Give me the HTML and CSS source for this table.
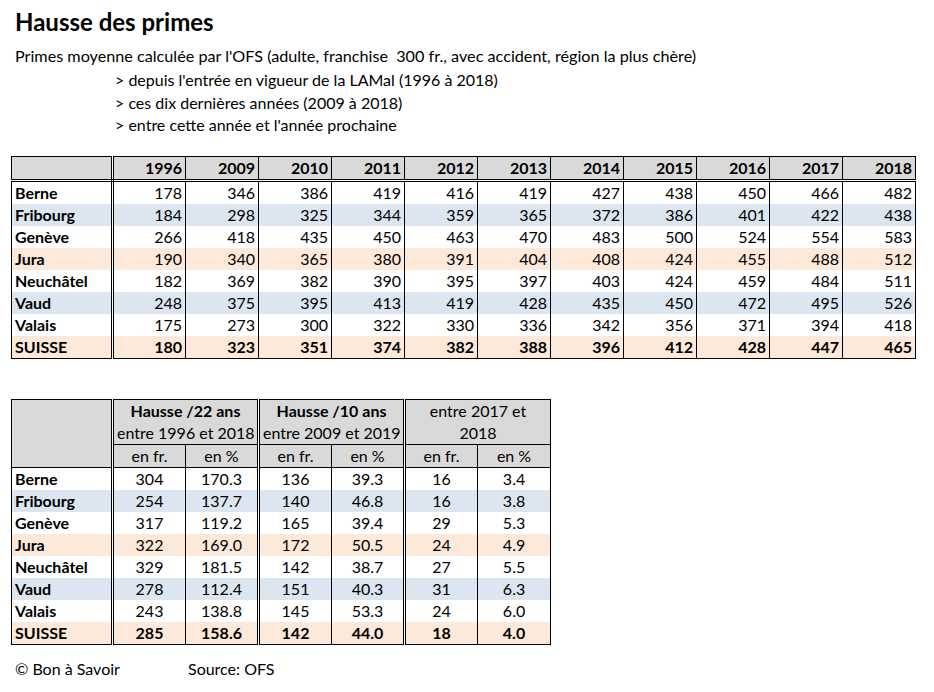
FILE: index.html
```html
<!DOCTYPE html>
<html lang="fr">
<head>
<meta charset="utf-8">
<title>Hausse des primes</title>
<link rel="stylesheet" href="styles.css">
</head>
<body>
<div class="page">
  <h1 class="title">Hausse des primes</h1>
  <p class="intro">Primes moyenne calculée par l'OFS (adulte, franchise&nbsp; 300 fr., avec accident, région la plus chère)</p>
  <ul class="points">
    <li>&gt; depuis l'entrée en vigueur de la LAMal (1996 à 2018)</li>
    <li>&gt; ces dix dernières années (2009 à 2018)</li>
    <li>&gt; entre cette année et l'année prochaine</li>
  </ul>

  <table class="grid years">
    <colgroup>
      <col class="c-name"><col><col><col><col><col><col><col><col><col><col><col>
    </colgroup>
    <thead>
      <tr><th class="name"></th><th>1996</th><th>2009</th><th>2010</th><th>2011</th><th>2012</th><th>2013</th><th>2014</th><th>2015</th><th>2016</th><th>2017</th><th>2018</th></tr>
    </thead>
    <tbody>
      <tr><td class="name">Berne</td><td>178</td><td>346</td><td>386</td><td>419</td><td>416</td><td>419</td><td>427</td><td>438</td><td>450</td><td>466</td><td>482</td></tr>
      <tr class="blue"><td class="name">Fribourg</td><td>184</td><td>298</td><td>325</td><td>344</td><td>359</td><td>365</td><td>372</td><td>386</td><td>401</td><td>422</td><td>438</td></tr>
      <tr><td class="name">Genève</td><td>266</td><td>418</td><td>435</td><td>450</td><td>463</td><td>470</td><td>483</td><td>500</td><td>524</td><td>554</td><td>583</td></tr>
      <tr class="peach"><td class="name">Jura</td><td>190</td><td>340</td><td>365</td><td>380</td><td>391</td><td>404</td><td>408</td><td>424</td><td>455</td><td>488</td><td>512</td></tr>
      <tr><td class="name">Neuchâtel</td><td>182</td><td>369</td><td>382</td><td>390</td><td>395</td><td>397</td><td>403</td><td>424</td><td>459</td><td>484</td><td>511</td></tr>
      <tr class="blue"><td class="name">Vaud</td><td>248</td><td>375</td><td>395</td><td>413</td><td>419</td><td>428</td><td>435</td><td>450</td><td>472</td><td>495</td><td>526</td></tr>
      <tr><td class="name">Valais</td><td>175</td><td>273</td><td>300</td><td>322</td><td>330</td><td>336</td><td>342</td><td>356</td><td>371</td><td>394</td><td>418</td></tr>
      <tr class="peach total"><td class="name">SUISSE</td><td>180</td><td>323</td><td>351</td><td>374</td><td>382</td><td>388</td><td>396</td><td>412</td><td>428</td><td>447</td><td>465</td></tr>
    </tbody>
  </table>

  <table class="grid rises">
    <colgroup>
      <col class="c-name"><col><col><col><col><col><col>
    </colgroup>
    <thead>
      <tr class="groups">
        <th class="name" rowspan="2"></th>
        <th colspan="2" class="grp"><strong>Hausse /22 ans</strong><br><span>entre 1996 et 2018</span></th>
        <th colspan="2" class="grp"><strong>Hausse /10 ans</strong><br><span>entre 2009 et 2019</span></th>
        <th colspan="2" class="grp"><span>entre 2017 et<br>2018</span></th>
      </tr>
      <tr class="units">
        <th>en fr.</th><th class="gend">en %</th>
        <th>en fr.</th><th class="gend">en %</th>
        <th>en fr.</th><th>en %</th>
      </tr>
    </thead>
    <tbody>
      <tr><td class="name">Berne</td><td>304</td><td class="gend">170.3</td><td>136</td><td class="gend">39.3</td><td>16</td><td>3.4</td></tr>
      <tr class="blue"><td class="name">Fribourg</td><td>254</td><td class="gend">137.7</td><td>140</td><td class="gend">46.8</td><td>16</td><td>3.8</td></tr>
      <tr><td class="name">Genève</td><td>317</td><td class="gend">119.2</td><td>165</td><td class="gend">39.4</td><td>29</td><td>5.3</td></tr>
      <tr class="peach"><td class="name">Jura</td><td>322</td><td class="gend">169.0</td><td>172</td><td class="gend">50.5</td><td>24</td><td>4.9</td></tr>
      <tr><td class="name">Neuchâtel</td><td>329</td><td class="gend">181.5</td><td>142</td><td class="gend">38.7</td><td>27</td><td>5.5</td></tr>
      <tr class="blue"><td class="name">Vaud</td><td>278</td><td class="gend">112.4</td><td>151</td><td class="gend">40.3</td><td>31</td><td>6.3</td></tr>
      <tr><td class="name">Valais</td><td>243</td><td class="gend">138.8</td><td>145</td><td class="gend">53.3</td><td>24</td><td>6.0</td></tr>
      <tr class="peach total"><td class="name">SUISSE</td><td>285</td><td class="gend">158.6</td><td>142</td><td class="gend">44.0</td><td>18</td><td>4.0</td></tr>
    </tbody>
  </table>

  <div class="footer">
    <span class="copy">© Bon à Savoir</span>
    <span class="source">Source: OFS</span>
  </div>
</div>
</body>
</html>
```
FILE: styles.css
```css
html, body {
  margin: 0;
  padding: 0;
  background: #ffffff;
}
body {
  font-family: Lato, "Open Sans", Arial, sans-serif;
  color: #000000;
}
.page {
  padding: 8px 0 0 11px;
}
.title {
  margin: 0 0 0 4px;
  font-size: 24px;
  line-height: 27px;
  font-weight: 700;
}
.intro {
  margin: 10px 0 0 4px;
  font-size: 16.2px;
  line-height: 22px;
}
.points {
  list-style: none;
  margin: 2px 0 0 104px;
  padding: 0;
  font-size: 16px;
  line-height: 22.5px;
}
.grid {
  border-collapse: collapse;
  table-layout: fixed;
  font-size: 16px;
  border: 1px solid #000;
}
.grid th, .grid td {
  height: 22px;
  padding: 0 3px;
  line-height: 20px;
  border-left: 1px solid #000;
  border-right: 1px solid #000;
  white-space: nowrap;
  overflow: hidden;
}
.grid thead th {
  background: #d9d9d9;
  border-bottom: 1px solid #000;
}
.grid .name {
  text-align: left;
  font-weight: 700;
  border-right: 3px double #000;
}
.grid .blue td { background: #dce6f1; }
.grid .peach td { background: #fde9d9; }
.grid .total td { font-weight: 700; }

.years {
  width: 905px;
  margin-top: 19px;
}
.years col { width: 73px; }
.years .c-name { width: 101px; }
.years thead th {
  text-align: right;
  font-weight: 700;
  border-bottom: 3px double #000;
}
.years td { text-align: right; }

.rises {
  width: 539px;
  margin-top: 40px;
}
.rises col { width: 73px; }
.rises .c-name { width: 101px; }
.rises th, .rises td { text-align: center; }
.rises thead th { font-weight: 400; }
.rises .groups th {
  height: 44px;
  line-height: 22px;
}
.rises .grp {
  border-right: 3px double #000;
}
.rises .grp:last-child { border-right: 1px solid #000; }
.rises .grp strong { font-weight: 700; }
.rises .gend { border-right: 3px double #000; }
.rises td.name { text-align: left; }

.footer {
  display: flex;
  margin: 13px 0 0 4px;
  font-size: 16px;
  line-height: 22px;
}
.copy { width: 173px; }
```
